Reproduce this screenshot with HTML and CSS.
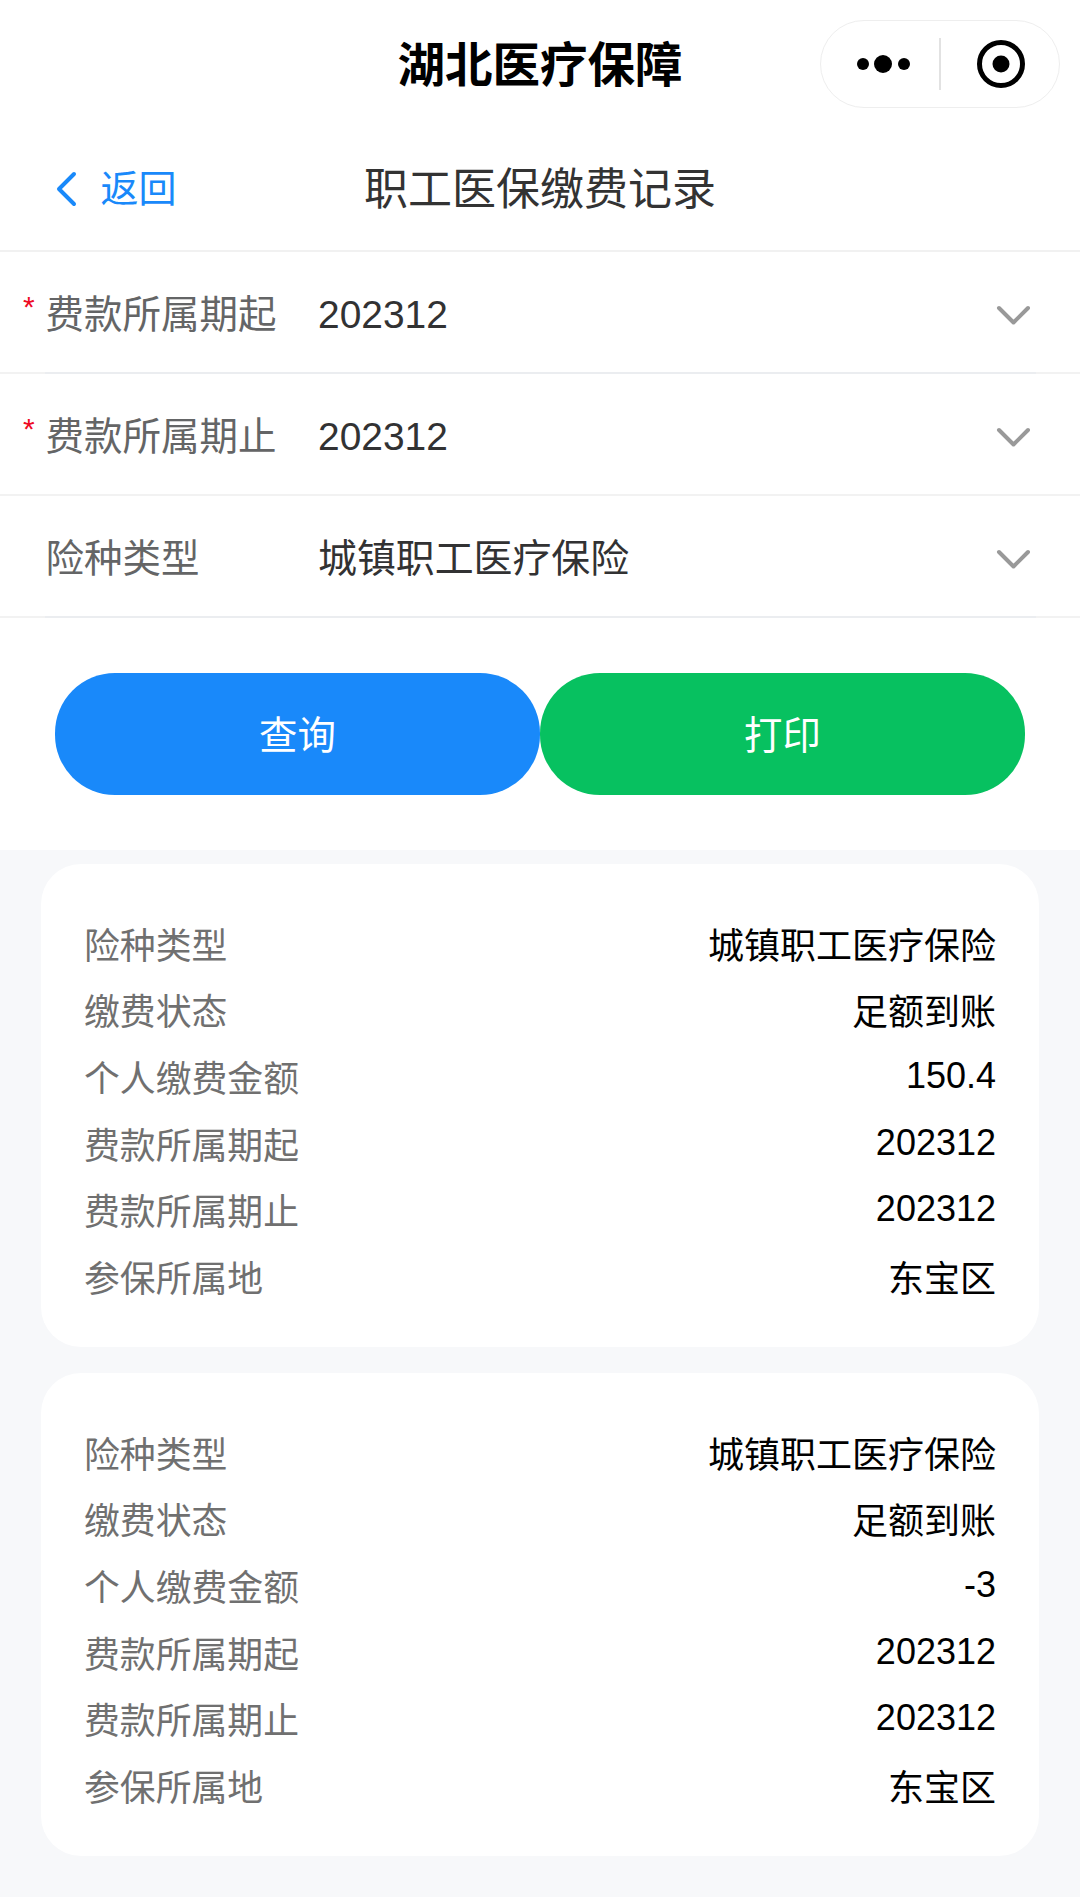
FILE: index.html
```html
<!DOCTYPE html>
<html lang="zh-CN">
<head>
<meta charset="utf-8">
<title>职工医保缴费记录</title>
<link rel="stylesheet" href="styles.css">
</head>
<body>
<div class="page">
  <header class="topbar">
    <h1 class="app-title">湖北医疗保障</h1>
    <div class="capsule">
      <svg class="capsule-dots" width="60" height="24" viewBox="0 0 60 24"><circle cx="8" cy="12" r="6"/><circle cx="28" cy="12" r="9"/><circle cx="49" cy="12" r="6"/></svg>
      <span class="capsule-line"></span>
      <svg class="capsule-target" width="50" height="50" viewBox="0 0 50 50"><circle cx="25" cy="25" r="21.5" fill="none" stroke="#000" stroke-width="5"/><circle cx="25" cy="25" r="8.5"/></svg>
    </div>
  </header>

  <nav class="subnav">
    <div class="back">
      <svg width="22" height="36" viewBox="0 0 22 36"><path d="M19 3 4 18l15 15" fill="none" stroke="#1989fa" stroke-width="4" stroke-linecap="round" stroke-linejoin="round"/></svg>
      <span class="back-text">返回</span>
    </div>
    <h2 class="page-title">职工医保缴费记录</h2>
  </nav>

  <section class="form">
    <div class="field field--inset">
      <span class="req">*</span>
      <span class="field-label">费款所属期起</span>
      <span class="field-value">202312</span>
      <svg class="chev" width="37" height="24" viewBox="0 0 37 24"><path d="M4 5l14.5 14.5L33 5" fill="none" stroke="#999" stroke-width="4" stroke-linecap="round" stroke-linejoin="round"/></svg>
    </div>
    <div class="field">
      <span class="req">*</span>
      <span class="field-label">费款所属期止</span>
      <span class="field-value">202312</span>
      <svg class="chev" width="37" height="24" viewBox="0 0 37 24"><path d="M4 5l14.5 14.5L33 5" fill="none" stroke="#999" stroke-width="4" stroke-linecap="round" stroke-linejoin="round"/></svg>
    </div>
    <div class="field field--inset">
      <span class="field-label">险种类型</span>
      <span class="field-value">城镇职工医疗保险</span>
      <svg class="chev" width="37" height="24" viewBox="0 0 37 24"><path d="M4 5l14.5 14.5L33 5" fill="none" stroke="#999" stroke-width="4" stroke-linecap="round" stroke-linejoin="round"/></svg>
    </div>
  </section>

  <div class="actions">
    <button class="btn btn--blue" type="button">查询</button>
    <button class="btn btn--green" type="button">打印</button>
  </div>

  <main class="records">
    <article class="card">
      <div class="line"><span class="line-label">险种类型</span><span class="line-value">城镇职工医疗保险</span></div>
      <div class="line"><span class="line-label">缴费状态</span><span class="line-value">足额到账</span></div>
      <div class="line"><span class="line-label">个人缴费金额</span><span class="line-value">150.4</span></div>
      <div class="line"><span class="line-label">费款所属期起</span><span class="line-value">202312</span></div>
      <div class="line"><span class="line-label">费款所属期止</span><span class="line-value">202312</span></div>
      <div class="line"><span class="line-label">参保所属地</span><span class="line-value">东宝区</span></div>
    </article>
    <article class="card">
      <div class="line"><span class="line-label">险种类型</span><span class="line-value">城镇职工医疗保险</span></div>
      <div class="line"><span class="line-label">缴费状态</span><span class="line-value">足额到账</span></div>
      <div class="line"><span class="line-label">个人缴费金额</span><span class="line-value">-3</span></div>
      <div class="line"><span class="line-label">费款所属期起</span><span class="line-value">202312</span></div>
      <div class="line"><span class="line-label">费款所属期止</span><span class="line-value">202312</span></div>
      <div class="line"><span class="line-label">参保所属地</span><span class="line-value">东宝区</span></div>
    </article>
  </main>
</div>
</body>
</html>
```
FILE: styles.css
```css
* { box-sizing: border-box; }
html, body { margin: 0; padding: 0; background: #fff; }
body { font-family: "Liberation Sans", "Noto Sans CJK SC", sans-serif; }
.page { width: 1080px; height: 1897px; display: flex; flex-direction: column; overflow: hidden; background: #fff; }

.topbar { position: relative; height: 130px; display: flex; align-items: center; justify-content: center; }
.app-title { margin: 2px 0 0; font-size: 47.5px; font-weight: 700; color: #000; line-height: 1; }
.capsule { position: absolute; left: 820px; top: 20px; width: 240px; height: 88px; border: 1.5px solid #eee; border-radius: 44px; display: flex; align-items: center; }
.capsule-dots { margin-left: 33.5px; flex: none; }
.capsule-line { width: 2px; height: 52px; background: #e2e2e2; margin-left: 24px; flex: none; }
.capsule-target { margin-left: 35px; flex: none; }

.subnav { position: relative; height: 122px; display: flex; align-items: center; justify-content: center; border-bottom: 2px solid #f1f1f1; }
.back { position: absolute; left: 55px; top: 37px; display: flex; align-items: center; gap: 23.5px; color: #1989fa; }
.back-text { font-size: 38px; line-height: 44px; }
.page-title { margin: 0; font-size: 44px; font-weight: 400; color: #333; line-height: 1; }

.field { position: relative; height: 122px; padding: 4px 48px 0 45.5px; display: flex; align-items: baseline; line-height: 118px; border-bottom: 2px solid #f2f2f2; }
.field--inset::after { content: ""; position: absolute; left: 45px; right: 44px; bottom: -2px; height: 2px; background: #ebedf0; }
.req { position: absolute; left: 23px; top: 38px; color: #ee0a24; font-size: 30px; line-height: 34px; }
.field-label { width: 272.5px; flex: none; font-size: 38.5px; color: #646566; }
.field-value { flex: 1; font-size: 38.9px; color: #323233; }
.chev { flex: none; align-self: center; margin-top: 1px; }

.actions { display: flex; padding: 55px; }
.btn { flex: 1; height: 122px; border: 0; border-radius: 60px; padding: 0 0 5px; font-family: inherit; font-size: 38.4px; color: #fff; }
.btn--blue { background: #1989fa; }
.btn--green { background: #07c160; }

.records { flex: 1; background: #f7f8fa; padding: 14px 41px 0; display: flex; flex-direction: column; gap: 26px; }
.card { height: 483px; background: #fff; border-radius: 40px; padding: 45.5px 43px 0; display: flex; flex-direction: column; }
.line { height: 66.67px; display: flex; align-items: center; justify-content: space-between; }
.line-label { color: #707070; font-size: 35.84px; }
.line-value { color: #000; font-size: 36px; }
```
